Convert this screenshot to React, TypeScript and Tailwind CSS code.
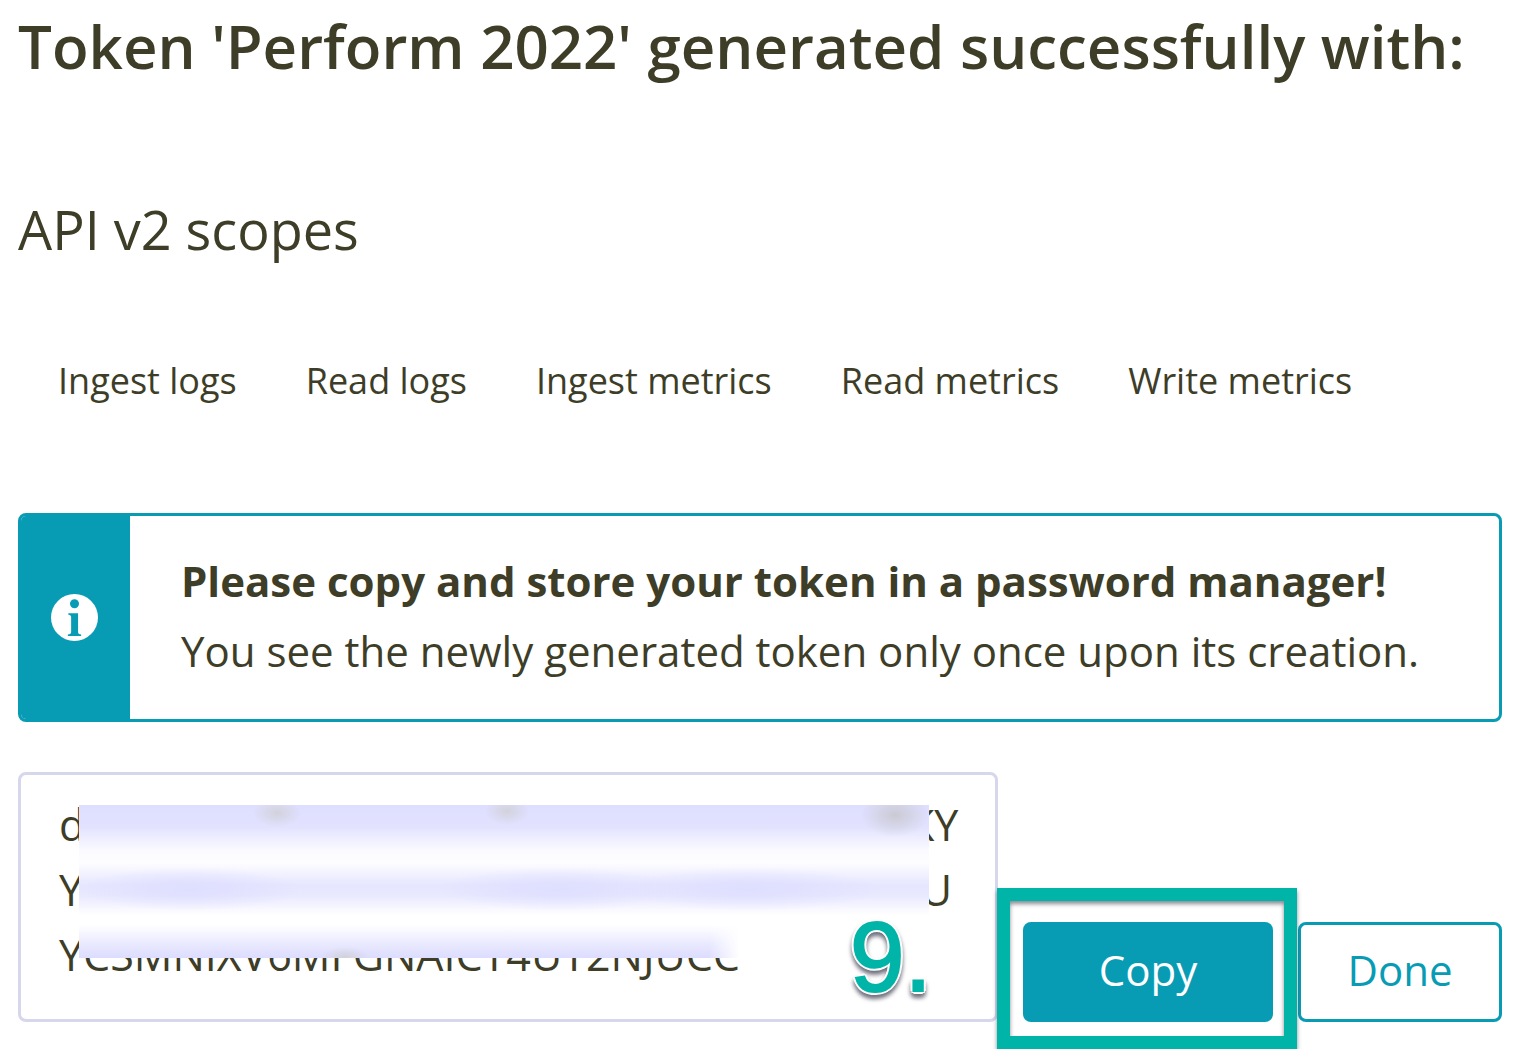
import React, { useRef } from "react";

const scopes = ["Ingest logs", "Read logs", "Ingest metrics", "Read metrics", "Write metrics"];

const gap = (n: number) => "\u00a0".repeat(n);
const token = [
  "d" + gap(73) + "\u2006KY",
  "Y" + gap(75) + "U",
  "YCSMNIXV6MFGNAICT4UT2NJUCC",
].join("\n");

function InfoIcon() {
  return (
    <svg viewBox="0 0 46 46" className="size-[47px]" aria-hidden="true">
      <circle cx="23" cy="23" r="23" fill="#fff" />
      <circle cx="23" cy="9.5" r="4.4" fill="#089cb4" />
      <path
        d="M17 18.800h9.500V37.200c0 1.700.8 2.200 3 2.400V41H16.500v-1.400c2.400-.2 3.200-.7 3.200-2.400V22.600c0-1.500-.7-2-2.700-2.300z"
        fill="#089cb4"
      />
    </svg>
  );
}

export default function App() {
  const field = useRef<HTMLTextAreaElement>(null);
  const copy = () => field.current?.select();
  return (
    <main className="bg-white pt-2 pr-3 pb-7 pl-[18px] font-['Open_Sans',sans-serif] text-[#3d3d28]">
      <h1 className="text-[60px] leading-[76px] font-semibold whitespace-nowrap">
        Token 'Perform 2022' generated successfully with:
      </h1>
      <h2 className="mt-[107px] text-[54px] leading-[76px]">API v2 scopes</h2>
      <ul className="mt-[86px] ml-10 flex gap-[69px] text-[36px] leading-[56px] whitespace-nowrap">
        {scopes.map((s) => (
          <li key={s}>{s}</li>
        ))}
      </ul>

      <section className="mt-[104px] flex overflow-hidden rounded-lg border-[3px] border-[#089cb4]">
        <div className="flex w-[109px] shrink-0 items-center justify-center bg-[#089cb4] pr-[3px]">
          <InfoIcon />
        </div>
        <div className="pt-[30px] pb-[33px] pl-[51px] text-[42px] leading-[70px] whitespace-nowrap">
          <p className="font-bold">Please copy and store your token in a password manager!</p>
          <p>You see the newly generated token only once upon its creation.</p>
        </div>
      </section>

      <div className="mt-[50px] flex items-end gap-[25px]">
        <div className="relative flex min-w-0 flex-1">
          <textarea
            ref={field}
            readOnly
            rows={3}
            aria-label="Generated token"
            value={token}
            className="block h-[250px] w-full resize-none overflow-hidden rounded-lg border-[3px] border-[#d6d6ec] bg-white px-[38px] py-[17px] text-[43px] leading-[65px] whitespace-pre outline-none"
          />
          <div className="absolute top-[33px] right-[69px] left-[61px] h-[110px] bg-white bg-[radial-gradient(ellipse_24px_14px_at_198px_8px,#d2d2dc,transparent),radial-gradient(ellipse_22px_14px_at_428px_6px,#d2d2dc,transparent),radial-gradient(ellipse_34px_22px_at_816px_10px,#cacad4,transparent),radial-gradient(ellipse_110px_22px_at_110px_84px,#dedeff,transparent),radial-gradient(ellipse_120px_22px_at_480px_84px,#dedeff,transparent),radial-gradient(ellipse_130px_22px_at_670px_84px,#dedeff,transparent),linear-gradient(#dedeff_0px,#e2e2ff_22px,#fbfbff_46px,#fdfdff_58px,#e6e6ff_80px,#e8e8ff_90px,#ffffff_110px)]" />
          <div className="absolute top-[143px] left-[61px] h-[43px] w-[662px] bg-white bg-[linear-gradient(to_right,transparent_630px,#fff_660px),radial-gradient(ellipse_24px_10px_at_266px_42px,#d2d2dc,transparent),linear-gradient(#ffffff_10px,#e8e8ff_30px,#dcdcff_43px)]" />
          <span
            className="absolute top-[139px] left-[832px] font-['Liberation_Sans',sans-serif] text-[98px] leading-[92px] text-[#00b4a8] [-webkit-text-stroke:2px_#00b4a8] [filter:drop-shadow(0_4px_2px_rgba(50,50,70,0.7))] [text-shadow:3px_0_#fff,-3px_0_#fff,0_3px_#fff,0_-3px_#fff,2px_2px_#fff,-2px_2px_#fff,2px_-2px_#fff,-2px_-2px_#fff]"
          >
            9.
          </span>
        </div>
        <div className="relative w-[250px] shrink-0">
          <button
            type="button"
            onClick={copy}
            className="block h-[100px] w-full rounded-lg bg-[#089cb4] pb-1 text-[42px] leading-[60px] text-white"
          >
            Copy
          </button>
          <div className="pointer-events-none absolute -top-[34px] -right-6 -bottom-[27px] -left-[26px] border-[13px] border-[#00b4a8] [filter:drop-shadow(0_3px_2px_rgba(60,60,80,0.6))]" />
        </div>
        <button
          type="button"
          className="h-[100px] w-[204px] shrink-0 rounded-lg border-[3px] border-[#089cb4] bg-white pb-1 text-[42px] leading-[60px] text-[#089cb4]"
        >
          Done
        </button>
      </div>
    </main>
  );
}
